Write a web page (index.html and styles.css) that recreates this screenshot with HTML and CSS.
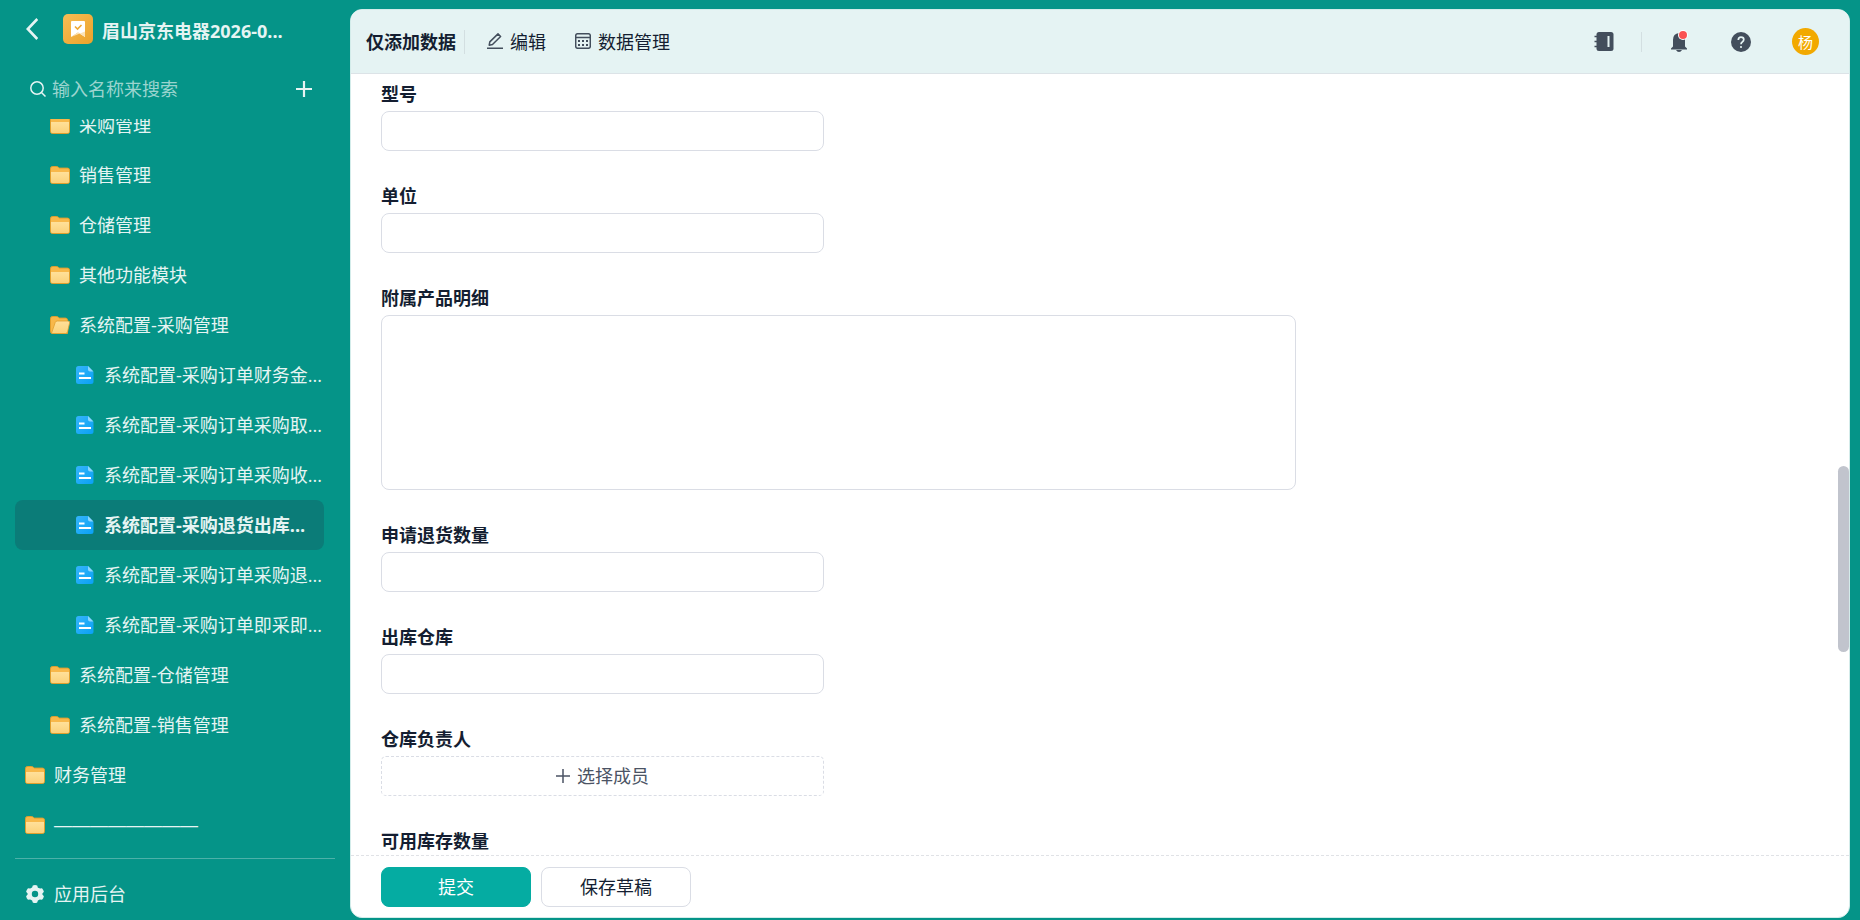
FILE: index.html
```html
<!DOCTYPE html>
<html lang="zh-CN">
<head>
<meta charset="utf-8">
<title>仅添加数据</title>
<link rel="stylesheet" href="styles.css">
</head>
<body>
<svg class="defs" width="0" height="0" aria-hidden="true">
  <defs>
    <linearGradient id="gFront" x1="0" y1="0" x2="0" y2="1"><stop offset="0" stop-color="#ffe09a"/><stop offset="1" stop-color="#fbd27a"/></linearGradient>
    <linearGradient id="gDoc" x1="0" y1="0" x2="1" y2="1"><stop offset="0" stop-color="#35b4fb"/><stop offset="1" stop-color="#0aa1f5"/></linearGradient>
    <linearGradient id="gApp" x1="0" y1="0" x2="1" y2="1"><stop offset="0" stop-color="#f7bd55"/><stop offset="1" stop-color="#eca22a"/></linearGradient>
    <symbol id="folder" viewBox="0 0 20 18">
      <path d="M.5 2.5Q.5.5 2.5.5H6.600Q7.600.5 8.300 1.200L9.200 2.100H17.500Q19.500 2.100 19.500 4.100V15.500Q19.500 17.500 17.500 17.500H2.500Q.5 17.500.5 15.500Z" fill="#f8b84a" stroke="#e09f2e"/>
      <path d="M1 6H19V15.500Q19 17 17.500 17H2.500Q1 17 1 15.500Z" fill="url(#gFront)"/>
    </symbol>
    <symbol id="folder-open" viewBox="0 0 20 18">
      <path d="M.5 2.500Q.5.5 2.500.5H6.600Q7.600.5 8.300 1.200L9.200 2.100H15.500Q17.500 2.100 17.500 4.100V17.500H2.500Q.5 17.500.5 15.500Z" fill="#f8b84a" stroke="#e09f2e"/>
      <path d="M5.200 6.600Q5.600 5 7.200 5H18Q20 5 19.600 6.800L17.600 15.800Q17.200 17.500 15.500 17.500H2.500Q1.500 17.500 1.800 16.300Z" fill="url(#gFront)" stroke="#e09f2e" stroke-width=".8"/>
    </symbol>
    <symbol id="doc" viewBox="0 0 18 18">
      <path d="M2.500 0H12L17.500 6V15.500Q17.500 18 15 18H2.500Q0 18 0 15.500V2.500Q0 0 2.500 0Z" fill="url(#gDoc)"/>
      <path d="M12 0L17.500 5.500H14Q12 5.500 12 3.500Z" fill="#8ad6ff"/>
      <path d="M3 7.500H8.500M3 12H15" stroke="#fff" stroke-width="1.900"/>
    </symbol>
  </defs>
</svg>
<div class="app">
  <aside class="sidebar">
    <header class="app-head">
      <button class="icon-btn back" aria-label="返回"><svg width="12" height="22" viewBox="0 0 12 22" fill="none" stroke="currentColor" stroke-width="2.600"><path d="M11.300 1L1.800 11L11.300 21"/></svg></button>
      <svg class="app-logo" width="30" height="30" viewBox="0 0 30 30"><rect width="30" height="30" rx="5" fill="url(#gApp)"/><path d="M9 7H21Q22 7 22 8V23L15 18.500L8 23V8Q8 7 9 7Z" fill="#fff"/><path d="M22 17.500V23L15 18.500L8 23Z" fill="#fbe3b8"/><path d="M12 12.500L14.500 15L18.500 11" fill="none" stroke="#efa832" stroke-width="1.600"/></svg>
      <h1 class="app-name">眉山京东电器2026-0...</h1>
    </header>
    <div class="search">
      <svg width="16" height="16" viewBox="0 0 16 16" fill="none" stroke="currentColor" stroke-width="1.500"><circle cx="7" cy="7" r="6.200"/><path d="M11.500 11.500L15.500 15.500"/></svg>
      <input class="search-input" type="text" placeholder="输入名称来搜索" aria-label="输入名称来搜索">
      <button class="icon-btn" aria-label="新建"><svg width="16" height="16" viewBox="0 0 16 16" stroke="currentColor" stroke-width="2.200"><path d="M8 0V16M0 8H16"/></svg></button>
    </div>
    <nav class="tree">
      <ul class="tree-list">
        <li><a class="item lv2" href="#"><svg class="folder"><use href="#folder"/></svg>采购管理</a></li>
        <li><a class="item lv2" href="#"><svg class="folder"><use href="#folder"/></svg>销售管理</a></li>
        <li><a class="item lv2" href="#"><svg class="folder"><use href="#folder"/></svg>仓储管理</a></li>
        <li><a class="item lv2" href="#"><svg class="folder"><use href="#folder"/></svg>其他功能模块</a></li>
        <li><a class="item lv2" href="#"><svg class="folder"><use href="#folder-open"/></svg>系统配置-采购管理</a></li>
        <li><a class="item lv3" href="#"><svg class="doc"><use href="#doc"/></svg>系统配置-采购订单财务金...</a></li>
        <li><a class="item lv3" href="#"><svg class="doc"><use href="#doc"/></svg>系统配置-采购订单采购取...</a></li>
        <li><a class="item lv3" href="#"><svg class="doc"><use href="#doc"/></svg>系统配置-采购订单采购收...</a></li>
        <li><a class="item lv3 active" href="#" aria-current="page"><svg class="doc"><use href="#doc"/></svg>系统配置-采购退货出库...</a></li>
        <li><a class="item lv3" href="#"><svg class="doc"><use href="#doc"/></svg>系统配置-采购订单采购退...</a></li>
        <li><a class="item lv3" href="#"><svg class="doc"><use href="#doc"/></svg>系统配置-采购订单即采即...</a></li>
        <li><a class="item lv2" href="#"><svg class="folder"><use href="#folder"/></svg>系统配置-仓储管理</a></li>
        <li><a class="item lv2" href="#"><svg class="folder"><use href="#folder"/></svg>系统配置-销售管理</a></li>
        <li><a class="item lv1" href="#"><svg class="folder"><use href="#folder"/></svg>财务管理</a></li>
        <li><a class="item lv1 dashes" href="#"><svg class="folder"><use href="#folder"/></svg>————————</a></li>
      </ul>
    </nav>
    <footer class="side-foot">
      <a class="item lv1" href="#"><svg class="gear" viewBox="0 0 20 20"><path fill="currentColor" fill-rule="evenodd" d="M7.800 1.500Q10 .5 12.200 1.500L12.900 3.800L15.200 4.600L17 4.200Q18.500 5.800 18.900 7.800L17.400 9.400V10.600L18.900 12.200Q18.500 14.200 17 15.800L14.800 15.400L12.900 16.400L12.200 18.500Q10 19.500 7.800 18.500L7.100 16.400L5.200 15.400L3 15.800Q1.500 14.200 1.100 12.200L2.600 10.600V9.400L1.100 7.800Q1.500 5.800 3 4.200L5.200 4.600L7.100 3.600ZM10 6.800A3.200 3.200 0 1 0 10 13.200A3.200 3.200 0 1 0 10 6.800Z"/></svg>应用后台</a>
    </footer>
  </aside>

  <main class="panel">
    <header class="topbar">
      <h2 class="title">仅添加数据</h2>
      <span class="rule"></span>
      <button class="tool"><svg width="16" height="16" viewBox="0 0 16 16" fill="none" stroke="currentColor" stroke-width="1.500"><path d="M0 15.200H16M2.200 12.200L2.800 8.900L11 .9L13.600 3.500L5.500 11.500Z" stroke-linejoin="round"/></svg>编辑</button>
      <button class="tool"><svg width="16" height="16" viewBox="0 0 16 16" fill="none" stroke="currentColor" stroke-width="1.500"><rect x=".7" y=".7" width="14.600" height="14.600" rx="2"/><path d="M1 4.500H15"/><path d="M3 8H13M3 12H13" stroke-dasharray="2 2" stroke-width="2"/></svg>数据管理</button>
      <div class="actions">
        <button class="icon-btn" aria-label="通讯录"><svg width="20" height="20" viewBox="0 0 20 20"><rect x="2.500" y="0" width="17" height="19" rx="2.500" fill="currentColor"/><path d="M.5 4.500H4M.5 9.500H4M.5 14.500H4" stroke="currentColor" stroke-width="1.600"/><path d="M14.500 4V15" stroke="#e5f3f3" stroke-width="2"/></svg></button>
        <span class="rule small"></span>
        <button class="icon-btn bell" aria-label="消息"><svg width="16" height="20" viewBox="0 0 16 20" fill="currentColor"><path d="M8 1Q14 1.500 14 8V14.500L16 16.500V17.500H0V16.500L2 14.500V8Q2 1.500 8 1ZM5 18H11Q10 20 8 20Q6 20 5 18Z"/></svg><span class="dot"></span></button>
        <button class="icon-btn help" aria-label="帮助"><svg width="20" height="20" viewBox="0 0 20 20"><circle cx="10" cy="10" r="10" fill="currentColor"/><path d="M7.300 8Q7.300 5.200 10 5.200Q12.800 5.200 12.800 7.600Q12.800 9 11.300 9.900Q10 10.700 10 12.200" fill="none" stroke="#e5f3f3" stroke-width="1.700"/><circle cx="10" cy="15" r="1.100" fill="#e5f3f3"/></svg></button>
        <button class="avatar">杨</button>
      </div>
    </header>
    <form class="form" id="record">
      <div class="field half"><label for="model">型号</label><input id="model" type="text"></div>
      <div class="field half"><label for="unit">单位</label><input id="unit" type="text"></div>
      <div class="field"><label for="detail">附属产品明细</label><textarea id="detail"></textarea></div>
      <div class="field half"><label for="qty">申请退货数量</label><input id="qty" type="text"></div>
      <div class="field half"><label for="store">出库仓库</label><input id="store" type="text"></div>
      <div class="field half"><label for="owner">仓库负责人</label><button class="picker" id="owner" type="button"><svg width="14" height="14" viewBox="0 0 14 14" stroke="currentColor" stroke-width="1.500"><path d="M7 0V14M0 7H14"/></svg>选择成员</button></div>
      <div class="field half"><label for="stock">可用库存数量</label><input id="stock" type="text"></div>
    </form>
    <span class="thumb"></span>
    <footer class="form-foot">
      <button class="btn primary" type="submit" form="record">提交</button>
      <button class="btn" type="button">保存草稿</button>
    </footer>
  </main>
</div>
</body>
</html>
```
FILE: styles.css
```css
* { box-sizing: border-box; }
body {
  margin: 0;
  font-family: "Open Sans", "Noto Sans CJK SC", sans-serif;
  font-size: 18px;
  line-height: 24px;
  color: #141e31;
  background: #059488;
}
button, input, textarea { font: inherit; color: inherit; }
button { border: 0; padding: 0; background: none; cursor: pointer; }
h1, h2 { margin: 0; font-size: 18px; font-weight: 700; }
svg { display: block; flex: none; }
.defs { position: absolute; }
.app { display: flex; height: 100vh; }

.sidebar {
  width: 350px;
  flex: none;
  display: flex;
  flex-direction: column;
  color: #e6f4f3;
}
.app-head { display: flex; align-items: center; height: 58px; padding-left: 26px; }
.app-logo { margin: 0 9px 0 25px; }
.app-name { padding-top: 3px; white-space: nowrap; }
.search { display: flex; align-items: center; height: 61px; padding: 0 38px 0 30px; }
.search-input {
  flex: 1;
  min-width: 0;
  border: 0;
  outline: 0;
  padding: 0 6px;
  background: none;
}
.search-input::placeholder { color: #9bd4cf; opacity: 1; }
.tree { flex: 1; min-height: 0; margin: 0 15px; overflow: hidden; }
.tree-list { list-style: none; margin: -19px 0 0; padding: 0; }
.item {
  display: flex;
  align-items: center;
  height: 50px;
  margin-right: 11px;
  border-radius: 8px;
  color: inherit;
  text-decoration: none;
  white-space: nowrap;
}
.lv1 { padding-left: 10px; }
.lv2 { padding-left: 35px; }
.lv3 { padding-left: 61px; }
.active { background: #0b7c78; font-weight: 700; }
.dashes { font-family: "Liberation Sans", sans-serif; }
.folder { width: 20px; height: 18px; margin-right: 9px; }
.doc { width: 18px; height: 18px; margin-right: 10px; }
.gear { width: 20px; height: 20px; margin-right: 9px; }
.side-foot { margin: 0 15px; padding: 10px 0 1px; border-top: 1px solid #4cb1a9; }

.panel {
  position: relative;
  flex: 1;
  min-width: 0;
  display: flex;
  flex-direction: column;
  margin: 9px 10px 2px 0;
  border: 1px solid #d3ecea;
  border-radius: 12px;
  background: #fff;
  overflow: hidden;
}
.topbar {
  display: flex;
  align-items: center;
  height: 64px;
  flex: none;
  padding: 0 30px 0 15px;
  border-bottom: 1px solid #dce3e7;
  background: #e5f3f3;
}
.rule { width: 1px; height: 24px; background: #d3dfe1; }
.title + .rule { margin: 0 22px 0 8px; }
.tool { display: flex; align-items: center; gap: 7px; margin-right: 29px; }
.tool svg { color: #434e5c; margin-bottom: 2px; }
.actions { display: flex; align-items: center; margin-left: auto; color: #434e5c; }
.small { height: 20px; margin: 0 29px 0 27px; }
.bell { position: relative; margin-right: 44px; }
.dot {
  position: absolute;
  top: -1px;
  right: 0;
  width: 8px;
  height: 8px;
  border-radius: 50%;
  background: #fa5252;
  box-shadow: 0 0 0 1px #fff;
}
.help { margin-right: 41px; }
.avatar {
  width: 27px;
  height: 27px;
  border-radius: 50%;
  background: #f2a900;
  color: #fff;
  font-size: 15px;
}

.form {
  flex: 1;
  min-height: 0;
  overflow: hidden;
  display: flex;
  flex-direction: column;
  gap: 33px;
  padding: 8px 30px 0;
}
.field {
  display: flex;
  flex-direction: column;
  flex: none;
  gap: 5px;
  width: 100%;
  max-width: 915px;
}
.half { max-width: 443px; }
.field label { font-weight: 700; }
.field input, .field textarea, .picker {
  width: 100%;
  height: 40px;
  padding: 0 12px;
  border: 1px solid #dadde5;
  border-radius: 8px;
  background: #fff;
}
.field textarea { height: 175px; resize: none; }
.field .picker {
  display: flex;
  align-items: center;
  justify-content: center;
  gap: 7px;
  border-style: dashed;
  border-radius: 5px;
  color: #4b5364;
}
.thumb {
  position: absolute;
  top: 50%;
  right: 0;
  width: 11px;
  height: 186px;
  margin-top: 2px;
  border-radius: 6px;
  background: #c1c4cd;
}
.form-foot {
  display: flex;
  gap: 10px;
  flex: none;
  padding: 11px 30px 10px;
  border-top: 1px dashed #e0e2e6;
}
.btn {
  width: 150px;
  height: 40px;
  border: 1px solid #dadde5;
  border-radius: 8px;
  background: #fff;
}
.primary { border-color: #05aca2; background: #05aca2; color: #fff; }
```
